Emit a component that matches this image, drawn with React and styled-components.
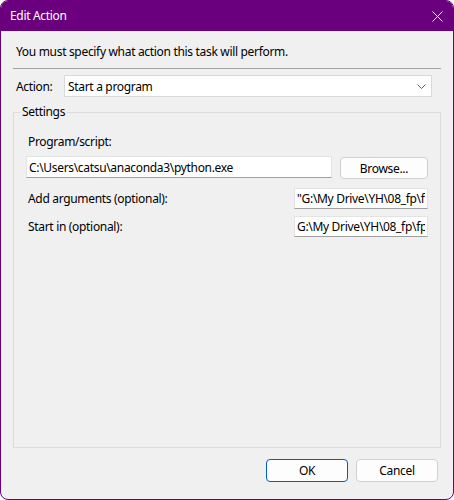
import styled, { createGlobalStyle } from 'styled-components';

const GlobalStyle = createGlobalStyle`
    html, body {
        margin: 0;
        padding: 0;
        background: #ffffff;
    }

    * {
        box-sizing: border-box;
    }
`;

const purple = '#6b007f';

const Window = styled.div`
    width: 454px;
    height: 500px;
    border: 1px solid ${purple};
    border-radius: 8px;
    overflow: hidden;
    background: #f0f0f0;
    display: flex;
    flex-direction: column;
    font-family: "Noto Sans", "Open Sans", sans-serif;
    font-size: 12px;
    letter-spacing: -0.32px;
    color: #000;
`;

const TitleBar = styled.header`
    height: 30px;
    flex-shrink: 0;
    background: ${purple};
    color: #fff;
    display: flex;
    align-items: center;
    justify-content: space-between;
    padding: 0 10px 0 9px;
`;

const Title = styled.span`
    line-height: 16px;
`;

const CloseButton = styled.button`
    background: transparent;
    border: none;
    padding: 0;
    width: 12px;
    height: 12px;
    display: flex;
    align-items: center;
    justify-content: center;
`;

const Content = styled.main`
    flex: 1;
    display: flex;
    flex-direction: column;
    padding: 13px 12px 17px;
`;

const Description = styled.p`
    margin: 0 0 0 3px;
    line-height: 16px;
`;

const Separator = styled.hr`
    margin: 8px 0 0;
    border: none;
    height: 1px;
    background: #a0a0a0;
`;

const ActionRow = styled.div`
    display: flex;
    align-items: center;
    margin: 6px 9px 0 3px;
`;

const ActionLabel = styled.label`
    width: 48px;
    flex-shrink: 0;
`;

const ComboBox = styled.div`
    flex: 1;
    height: 22px;
    background: #fff;
    border: 1px solid #d9d9d9;
    display: flex;
    align-items: center;
    justify-content: space-between;
    padding: 0 5px 0 3px;
`;

const GroupBox = styled.fieldset`
    margin: 7px 0 0;
    padding: 0;
    flex: 1;
    min-width: 0;
    border: 1px solid #dcdcdc;
    display: flex;
    flex-direction: column;
`;

const Legend = styled.legend`
    margin-left: 6px;
    padding: 0 2px;
    line-height: 16px;
`;

const GroupInner = styled.div`
    padding: 14px 12px 0;
    display: flex;
    flex-direction: column;
`;

const FieldLabel = styled.label`
    display: block;
    padding-left: 2px;
    line-height: 16px;
`;

const ProgramRow = styled.div`
    display: flex;
    gap: 8px;
    margin-top: 6px;
    align-items: flex-start;
`;

const TextInput = styled.input`
    height: ${({ $h }) => $h || 22}px;
    width: ${({ $w }) => $w}px;
    flex-shrink: 0;
    margin: 0;
    padding: 0 2px;
    border: 1px solid #e3e3e3;
    border-bottom-color: #a0a0a0;
    border-radius: 0;
    background: #fff;
    font: inherit;
    letter-spacing: inherit;
    color: #000;
    outline: none;
`;

const OptionRow = styled.div`
    display: flex;
    align-items: center;
    justify-content: space-between;
    margin-top: ${({ $top }) => $top}px;
`;

const Button = styled.button`
    width: ${({ $w }) => $w}px;
    height: ${({ $h }) => $h}px;
    margin-top: ${({ $top }) => $top || 0}px;
    flex-shrink: 0;
    padding: 0;
    background: #fdfdfd;
    border: 1px solid ${({ $primary }) => ($primary ? '#005fb8' : '#d0d0d0')};
    border-radius: 4px;
    font: inherit;
    letter-spacing: inherit;
    color: #000;
`;

const Footer = styled.footer`
    display: flex;
    justify-content: flex-end;
    gap: 8px;
    margin: 11px 3px 0 0;
`;

const XIcon = () => (
    <svg width="11" height="11" viewBox="0 0 11 11">
        <path d="M0.5 0.5 L10.5 10.5 M10.5 0.5 L0.5 10.5" stroke="#fff" strokeWidth="1" />
    </svg>
);

const Chevron = () => (
    <svg width="9" height="5" viewBox="0 0 9 5">
        <path d="M0.5 0.5 L4.5 4.5 L8.5 0.5" stroke="#606060" strokeWidth="1" fill="none" />
    </svg>
);

const App = () => {
    return (
        <>
            <GlobalStyle />
            <Window>
                <TitleBar>
                    <Title>Edit Action</Title>
                    <CloseButton aria-label="Close"><XIcon /></CloseButton>
                </TitleBar>
                <Content>
                    <Description>You must specify what action this task will perform.</Description>
                    <Separator />
                    <ActionRow>
                        <ActionLabel>Action:</ActionLabel>
                        <ComboBox>
                            <span>Start a program</span>
                            <Chevron />
                        </ComboBox>
                    </ActionRow>
                    <GroupBox>
                        <Legend>Settings</Legend>
                        <GroupInner>
                            <FieldLabel>Program/script:</FieldLabel>
                            <ProgramRow>
                                <TextInput $w={306} readOnly value={"C:\\Users\\catsu\\anaconda3\\python.exe"} />
                                <Button $w={88} $h={22} $top={1}>Browse...</Button>
                            </ProgramRow>
                            <OptionRow $top={9}>
                                <FieldLabel>Add arguments (optional):</FieldLabel>
                                <TextInput $w={134} $h={21} readOnly value={'"G:\\My Drive\\YH\\08_fp\\fp_main.py"'} />
                            </OptionRow>
                            <OptionRow $top={7}>
                                <FieldLabel>Start in (optional):</FieldLabel>
                                <TextInput $w={134} $h={21} readOnly value={"G:\\My Drive\\YH\\08_fp\\fp_project"} />
                            </OptionRow>
                        </GroupInner>
                    </GroupBox>
                    <Footer>
                        <Button $w={82} $h={23} $primary>OK</Button>
                        <Button $w={82} $h={23}>Cancel</Button>
                    </Footer>
                </Content>
            </Window>
        </>
    );
};

export default App;
